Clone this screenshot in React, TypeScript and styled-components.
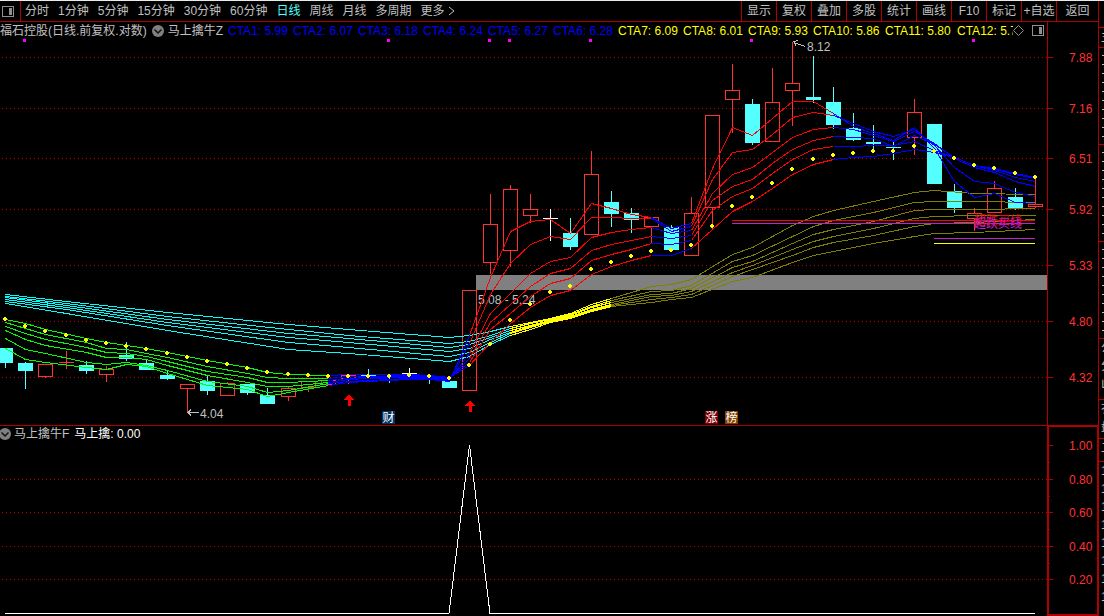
import React, { useEffect, useRef, useState } from "react";
import styled, { createGlobalStyle } from "styled-components";

const RED_LINE = "#b00000";
const UP = "#ff3232";
const DOWN = "#54ffff";
const GREY = "#c0c0c0";
const FONT = `"Liberation Sans", "Noto Sans CJK SC", sans-serif`;

const Global = createGlobalStyle`
  * { box-sizing: border-box; }
  body { margin: 0; background: #000; color: ${GREY}; font: 12px/16px ${FONT}; }
`;

const Page = styled.div`
  display: flex;
  min-height: 100vh;
  border-top: 1px solid #e8ece8;
  background: #000;
`;
const Main = styled.main`
  flex: 1;
  min-width: 0;
  display: flex;
  flex-direction: column;
`;
const Toolbar = styled.header`
  display: flex;
  height: 21px;
  border-bottom: 1px solid ${RED_LINE};
`;
const PlainButton = styled.button`
  padding: 0;
  border: 0;
  background: none;
  color: inherit;
  font: inherit;
  white-space: nowrap;
  cursor: pointer;
`;
const LayoutButton = styled(PlainButton)`
  display: flex;
  align-items: center;
  width: 21px;
  padding-left: 2px;
  border-right: 1px solid ${RED_LINE};
`;
const Periods = styled.nav`
  flex: 1;
  display: flex;
  align-items: center;
  gap: 9px;
  padding-left: 4px;
  overflow: hidden;
`;
const PeriodButton = styled(PlainButton)<{ $active?: boolean }>`
  display: flex;
  align-items: center;
  gap: 3px;
  color: ${(p) => (p.$active ? DOWN : GREY)};
`;
const Tools = styled.div`
  display: flex;
`;
const ToolButton = styled(PlainButton)<{ $wide?: boolean }>`
  width: ${(p) => (p.$wide ? 42 : 35)}px;
  border-left: 1px solid ${RED_LINE};
`;
const Panel = styled.section`
  display: flex;
`;
const Plot = styled.div<{ $divided?: boolean }>`
  flex: 1;
  min-width: 0;
  border-top: ${(p) => (p.$divided ? `1px solid ${RED_LINE}` : "0")};
  & > svg { display: block; width: 100%; }
`;
const Legend = styled.div<{ $height: number }>`
  display: flex;
  align-items: center;
  height: ${(p) => p.$height}px;
  white-space: nowrap;
`;
const ToggleButton = styled(PlainButton)<{ $edge?: boolean }>`
  display: flex;
  margin: ${(p) => (p.$edge ? "0 3px 0 -1px" : "0 4px 0 5px")};
`;
const IndicatorName = styled.span`
  margin-right: 5px;
`;
const Values = styled.div`
  flex: 1;
  min-width: 0;
  display: flex;
  overflow: hidden;
`;
const Value = styled.span<{ $color: string; $wide?: boolean }>`
  flex: none;
  width: ${(p) => (p.$wide ? 72 : 65)}px;
  color: ${(p) => p.$color};
`;
const LegendTools = styled.div`
  display: flex;
  align-items: center;
  gap: 8px;
  padding-right: 3px;
`;
const White = styled.span`
  color: #fff;
`;
const Axis = styled.div<{ $selected?: boolean }>`
  width: 51px;
  border: 0 solid ${RED_LINE};
  border-width: ${(p) => (p.$selected ? "2px 1px 2px 2px" : "0 0 0 1px")};
  & > svg { display: block; width: 100%; }
`;
const Strip = styled.aside`
  width: 6px;
  overflow: hidden;
  border-left: 1px solid ${RED_LINE};
`;
const StripCell = styled.div<{ $height: number; $marks?: boolean; $last?: boolean }>`
  height: ${(p) => p.$height}px;
  padding-left: 2px;
  overflow: hidden;
  line-height: 18px;
  border-bottom: ${(p) => (p.$last ? "0" : `1px solid ${RED_LINE}`)};
  background: ${(p) =>
    p.$marks
      ? `repeating-linear-gradient(transparent 0 7px, ${GREY} 7px 8px, transparent 8px 9px) 3px 0 no-repeat`
      : "none"};
`;
const StripLine = styled.div`
  width: 12px;
`;

/* ---------- data ---------- */

type Candle = [kind: "u" | "d" | "w", high: number, top: number, bottom: number, low: number];

const candles: Candle[] = [
  ["d", 348, 348, 363, 368], ["d", 362, 363, 371, 389], ["u", 364, 364, 377, 378], ["u", 351, 362, 363, 369],
  ["d", 361, 365, 371, 374], ["u", 366, 369, 375, 382], ["d", 342, 355, 359, 361], ["d", 359, 363, 370, 370],
  ["d", 371, 375, 379, 380], ["u", 384, 384, 389, 413], ["d", 375, 381, 391, 395], ["u", 382, 383, 396, 396],
  ["d", 384, 384, 393, 395], ["d", 388, 395, 404, 404], ["u", 387, 388, 397, 401], ["u", 381, 381, 388, 392],
  ["u", 380, 380, 385, 385], ["u", 375, 375, 379, 384], ["d", 369, 374, 378, 378], ["d", 375, 376, 378, 383],
  ["w", 368, 373, 374, 376], ["d", 376, 376, 379, 384], ["d", 379, 381, 388, 388], ["u", 290, 290, 391, 391],
  ["u", 194, 224, 263, 274], ["u", 185, 189, 251, 267], ["u", 194, 209, 216, 223], ["w", 209, 218, 219, 241],
  ["d", 218, 233, 247, 250], ["u", 151, 174, 235, 235], ["d", 191, 202, 214, 227], ["d", 208, 213, 220, 233],
  ["u", 217, 217, 227, 243], ["d", 225, 227, 250, 250], ["u", 197, 213, 256, 256], ["u", 115, 115, 208, 229],
  ["u", 64, 90, 100, 133], ["d", 99, 104, 143, 145], ["u", 68, 102, 142, 142], ["u", 42, 83, 91, 126],
  ["d", 56, 97, 100, 103], ["d", 87, 102, 125, 129], ["d", 113, 128, 140, 141], ["d", 125, 142, 144, 150],
  ["d", 142, 147, 148, 160], ["u", 99, 112, 138, 155], ["d", 124, 124, 184, 184], ["d", 184, 191, 208, 213],
  ["u", 208, 213, 219, 231], ["u", 181, 188, 213, 213], ["d", 188, 197, 208, 210], ["u", 177, 204, 207, 208],
];

const dots = [
  319, 326, 331, 335, 340, 343, 346, 349, 353, 357, 361, 364, 368, 372, 374, 375, 376, 376, 376, 376, 375, 376, 378,
  365, 344, 320, 304, 292, 286, 269, 262, 256, 251, 250, 245, 226, 206, 197, 183, 169, 159, 155, 153, 151, 151, 146,
  151, 158, 165, 168, 173, 177,
];

/* Each row is [bar index, y of the six averages]. */
type Row = [number, number[]];
type Segment = { color: string; from: number; to: number };

const slowRows: Row[] = [
  [0, [294, 296, 297, 299, 301, 303]], [3, [301, 303, 305, 307, 309, 313]], [8, [312, 316, 319, 322, 325, 330]],
  [14, [324, 329, 333, 337, 342, 349]], [17, [329, 335, 338, 342, 347, 353]], [22, [337, 343, 347, 351, 356, 361]],
  [23, [335, 341, 344, 348, 352, 356]], [24, [331, 335, 337, 339, 342, 344]], [25, [326, 328, 330, 332, 333, 335]],
  [26, [322, 323, 325, 326, 327, 329]], [27, [318, 319, 320, 320, 321, 322]], [28, [313, 314, 315, 316, 317, 318]],
  [29, [304, 306, 307, 309, 310, 311]], [30, [298, 300, 302, 304, 305, 306]], [32, [286, 291, 294, 296, 299, 302]],
  [33, [284, 290, 293, 295, 297, 299]], [34, [279, 285, 288, 291, 294, 297]], [36, [254, 261, 267, 272, 276, 281]],
  [37, [247, 255, 261, 265, 269, 277]], [39, [225, 236, 243, 249, 255, 262]], [40, [216, 226, 234, 241, 247, 255]],
  [41, [210, 220, 229, 236, 242, 251]], [43, [201, 212, 221, 228, 235, 243]], [45, [192, 202, 210, 218, 226, 236]],
  [46, [190, 201, 209, 216, 223, 233]], [48, [193, 201, 209, 215, 222, 232]], [51, [194, 202, 208, 215, 219, 229]],
];
const slowSegments: Segment[] = [
  { color: "#00ffff", from: 0, to: 25 },
  { color: "#ffff00", from: 25, to: 30 },
  { color: "#808000", from: 30, to: 51 },
];

const fastRows: Row[] = [
  [0, [348, 338, 330, 326, 322, 319]], [1, [359, 349, 339, 333, 328, 323]], [2, [362, 353, 345, 339, 334, 329]],
  [4, [367, 362, 352, 347, 342, 338]], [5, [369, 364, 357, 352, 348, 342]], [6, [364, 362, 357, 353, 349, 345]],
  [7, [366, 365, 359, 356, 353, 348]], [8, [373, 370, 365, 361, 357, 352]], [10, [385, 381, 375, 371, 366, 360]],
  [12, [389, 386, 382, 377, 373, 367]], [13, [396, 392, 386, 382, 377, 372]], [14, [392, 390, 386, 382, 378, 374]],
  [16, [385, 383, 382, 380, 378, 375]], [17, [382, 381, 379, 378, 376, 374]], [18, [381, 380, 378, 377, 376, 374]],
  [20, [379, 378, 377, 376, 375, 374]], [21, [379, 378, 378, 377, 376, 375]], [22, [381, 380, 379, 378, 377, 377]],
  [23, [335, 343, 353, 358, 362, 365]], [24, [277, 294, 313, 322, 329, 342]], [25, [231, 263, 293, 304, 313, 323]],
  [26, [221, 244, 273, 286, 296, 307]], [27, [219, 236, 261, 273, 283, 295]], [28, [233, 239, 257, 268, 278, 290]],
  [29, [203, 217, 237, 250, 260, 274]], [30, [208, 217, 232, 244, 254, 266]], [31, [214, 218, 229, 240, 249, 260]],
  [32, [217, 218, 227, 236, 243, 255]], [33, [228, 231, 233, 238, 244, 255]], [34, [223, 226, 230, 235, 240, 248]],
  [35, [168, 179, 193, 200, 210, 229]], [36, [127, 152, 174, 186, 196, 211]], [37, [135, 149, 167, 179, 188, 201]],
  [38, [118, 134, 152, 163, 173, 188]], [39, [101, 117, 137, 149, 159, 174]], [40, [101, 112, 129, 140, 149, 164]],
  [41, [113, 115, 127, 136, 146, 159]], [42, [126, 123, 129, 137, 146, 157]], [43, [133, 131, 135, 138, 145, 156]],
  [44, [140, 136, 141, 146, 145, 153]], [45, [127, 129, 131, 135, 141, 149]], [46, [148, 145, 143, 144, 150, 152]],
  [47, [181, 167, 158, 157, 157, 157]], [48, [197, 181, 167, 165, 165, 165]], [49, [193, 183, 172, 170, 169, 168]],
  [50, [202, 192, 181, 177, 174, 173]], [51, [203, 196, 186, 181, 178, 177]],
];
const fastSegments: Segment[] = [
  { color: "#00ff00", from: 0, to: 16 },
  { color: "#0000ff", from: 16, to: 23 },
  { color: "#ff0000", from: 23, to: 32 },
  { color: "#0000ff", from: 32, to: 34 },
  { color: "#ff0000", from: 34, to: 41 },
  { color: "#0000ff", from: 41, to: 51 },
];

const periods = ["分时", "1分钟", "5分钟", "15分钟", "30分钟", "60分钟", "日线", "周线", "月线", "多周期"];
const tools = ["显示", "复权", "叠加", "多股", "统计", "画线", "F10", "标记", "+自选", "返回"];
const ctas = ["5.99", "6.07", "6.18", "6.24", "6.27", "6.28", "6.09", "6.01", "5.93", "5.86", "5.80", "5.74"];
const priceTicks: [string, number][] = [
  ["7.88", 57], ["7.16", 108], ["6.51", 158], ["5.92", 209], ["5.33", 265], ["4.80", 321], ["4.32", 377],
];
const signalTicks: [string, number][] = [
  ["1.00", 445], ["0.80", 479], ["0.60", 512], ["0.40", 546], ["0.20", 579],
];

/* ---------- drawing ---------- */

const BASE = 1047;
const barX = (i: number) => Math.round(5 + 20.19 * i);

function usePlotWidth() {
  const ref = useRef<HTMLDivElement>(null);
  const [width, setWidth] = useState(BASE);
  useEffect(() => {
    if (!ref.current) return;
    const watcher = new ResizeObserver(([entry]) => setWidth(Math.round(entry.contentRect.width)));
    watcher.observe(ref.current);
    return () => watcher.disconnect();
  }, []);
  return { ref, width, sx: (x: number) => Math.round((x * width) / BASE) };
}

type Scale = (x: number) => number;

function Averages({ rows, segments, sx }: { rows: Row[]; segments: Segment[]; sx: Scale }) {
  return (
    <g fill="none">
      {segments.map((s) =>
        rows[0][1].map((_, k) => (
          <polyline
            key={`${s.from}-${k}`}
            stroke={s.color}
            points={rows
              .filter(([i]) => i >= s.from && i <= s.to)
              .map(([i, ys]) => `${sx(barX(i)) + 0.5},${ys[k] + 0.5}`)
              .join(" ")}
          />
        ))
      )}
    </g>
  );
}

function Candles({ sx }: { sx: Scale }) {
  return (
    <g>
      {candles.map(([kind, high, top, bottom, low], i) => {
        const x = sx(barX(i));
        const color = kind === "u" ? UP : kind === "d" ? DOWN : "#fff";
        return (
          <g key={i} fill={color}>
            {high < top && <rect x={x} y={high} width={1} height={top - high} />}
            {low > bottom && <rect x={x} y={bottom} width={1} height={low - bottom} />}
            {kind === "u" && bottom - top > 1 ? (
              <rect x={x - 6.5} y={top + 0.5} width={14} height={bottom - top - 1} fill="none" stroke={UP} />
            ) : (
              <rect x={x - 7} y={top} width={15} height={bottom - top} />
            )}
          </g>
        );
      })}
    </g>
  );
}

function GridLine({ y, width }: { y: number; width: number }) {
  return <path d={`M2 ${y + 0.5}H${width}`} stroke="#c00000" strokeDasharray="1 3" />;
}

function Badge({ x, fill, label }: { x: number; fill: string; label: string }) {
  return (
    <g>
      <rect x={x} y={411} width={13} height={13} fill={fill} />
      <text x={x + 0.5} y={422} fill="#fff">{label}</text>
    </g>
  );
}

function BuyArrow({ x, y }: { x: number; y: number }) {
  return <path d={`M${x} ${y}l5 6h-3v6h-3v-6h-4z`} fill="#ff0000" />;
}

function PriceChart({ width, sx }: { width: number; sx: Scale }) {
  return (
    <svg height={386} viewBox={`0 39 ${width} 386`} fontSize={12} fontFamily={FONT} shapeRendering="crispEdges">
      {priceTicks.map(([label, y]) => <GridLine key={label} y={y} width={width} />)}
      <rect x={sx(476)} y={275} width={width - sx(476)} height={15} fill="#808080" />
      <text x={sx(478)} y={304} fill={GREY}>5.08 - 5.24</text>
      {[24, 388, 489, 509, 590, 751, 973].map((x) => (
        <rect key={x} x={sx(x) - 1} y={39} width={3} height={3} fill="#ff00ff" />
      ))}
      <Candles sx={sx} />
      <Averages rows={slowRows} segments={slowSegments} sx={sx} />
      <Averages rows={fastRows} segments={fastSegments} sx={sx} />
      <path d={`M${sx(732)} 220.5H${sx(1035)}`} stroke="#ff0000" />
      <path d={`M${sx(732)} 223.5H${sx(1035)}`} stroke="#c020d0" />
      <path d={`M${sx(934)} 238.5H${sx(1035)}`} stroke="#c020d0" />
      <path d={`M${sx(934)} 243.5H${sx(1035)}`} stroke="#ffff00" />
      <text x={sx(974)} y={225} fill="#e00000">超跌买线</text>
      <text x={sx(974)} y={228} fill="#c020d0">超跌买线</text>
      <g fill="#ffff00">
        {dots.map((y, i) => {
          const x = sx(barX(i));
          return <path key={i} d={`M${x - 1} ${y - 2}h2v1h1v2h-1v1h-2v-1h-1v-2h1z`} />;
        })}
      </g>
      <BuyArrow x={sx(349)} y={394} />
      <BuyArrow x={sx(470)} y={400} />
      <Badge x={sx(382)} fill="#003366" label="财" />
      <Badge x={sx(705)} fill="#7a0000" label="涨" />
      <Badge x={sx(725)} fill="#804000" label="榜" />
      <g fill="none" stroke={GREY}>
        <path d={`M${sx(187)} 412.5h12M${sx(187) + 4} 409.5l-3 3l3 3`} />
        <path d={`M${sx(794)} 42.5l11 4M${sx(794) + 4} 40.5l-4 1l2 4`} />
      </g>
      <text x={sx(200)} y={418} fill={GREY}>4.04</text>
      <text x={sx(807)} y={51} fill={GREY}>8.12</text>
    </svg>
  );
}

function SignalChart({ width, sx }: { width: number; sx: Scale }) {
  return (
    <svg height={174} viewBox={`0 442 ${width} 174`} shapeRendering="crispEdges">
      {signalTicks.slice(1).map(([label, y]) => <GridLine key={label} y={y} width={width} />)}
      <path
        d={`M${sx(5)} 613.5H${sx(449)}L${sx(469) + 0.5} 445L${sx(490)} 613.5H${sx(1035)}`}
        fill="none"
        stroke="#fff"
      />
    </svg>
  );
}

function AxisScale({ ticks, minor = [], top, height, inset }: {
  ticks: [string, number][]; minor?: number[]; top: number; height: number; inset: number;
}) {
  return (
    <svg height={height} viewBox={`${inset} ${top} ${inset === 1 ? 50 : 48} ${height}`} fontSize={12} fontFamily={FONT}>
      {ticks.map(([label, y]) => (
        <g key={label}>
          <rect x={inset} y={y} width={6 - inset} height={1} fill={RED_LINE} />
          <text x={22} y={y + 5} fill={UP}>{label}</text>
        </g>
      ))}
      {minor.map((y) => <rect key={y} x={inset} y={y} width={1} height={1} fill={RED_LINE} />)}
    </svg>
  );
}

function SplitIcon() {
  return (
    <svg width="12" height="11" viewBox="0 0 12 11" shapeRendering="crispEdges">
      <rect x="0.5" y="0.5" width="11" height="10" rx="1" fill="none" stroke="#909090" />
      <rect x="7" y="2" width="3" height="7" fill="#909090" />
    </svg>
  );
}

function RoundChevron() {
  return (
    <svg width="12" height="12" viewBox="0 0 12 12">
      <circle cx="6" cy="6" r="6" fill="#808080" />
      <path d="M2.5 4.5L6 8L9.5 4.5" fill="none" stroke="#111" strokeWidth="1.5" />
    </svg>
  );
}

function DiamondIcon() {
  return (
    <svg width="11" height="11" viewBox="0 0 11 11">
      <path d="M5.5 0.5L10.5 5.5L5.5 10.5L0.5 5.5Z" fill="none" stroke="#909090" />
    </svg>
  );
}

export default function App() {
  const price = usePlotWidth();
  const signal = usePlotWidth();
  return (
    <>
      <Global />
      <Page>
        <Main>
          <Toolbar>
            <LayoutButton aria-label="布局"><SplitIcon /></LayoutButton>
            <Periods>
              {periods.map((p) => <PeriodButton key={p} $active={p === "日线"}>{p}</PeriodButton>)}
              <PeriodButton>
                更多
                <svg width="7" height="10" viewBox="0 0 7 10">
                  <path d="M1 1L6 5L1 9" fill="none" stroke={GREY} />
                </svg>
              </PeriodButton>
            </Periods>
            <Tools>
              {tools.map((t) => <ToolButton key={t} $wide={t === "返回"}>{t}</ToolButton>)}
            </Tools>
          </Toolbar>

          <Panel>
            <Plot ref={price.ref}>
              <Legend $height={17}>
                <span>福石控股(日线.前复权.对数)</span>
                <ToggleButton aria-label="指标"><RoundChevron /></ToggleButton>
                <IndicatorName>马上擒牛Z</IndicatorName>
                <Values>
                  {ctas.map((v, i) => (
                    <Value key={i} $color={i < 6 ? "#0000ff" : "#ffff00"} $wide={i > 8}>
                      {`CTA${i + 1}: ${v}`}
                    </Value>
                  ))}
                </Values>
                <LegendTools><DiamondIcon /><SplitIcon /></LegendTools>
              </Legend>
              <PriceChart width={price.width} sx={price.sx} />
            </Plot>
            <Axis>
              <AxisScale ticks={priceTicks} top={22} height={403} inset={1} />
            </Axis>
          </Panel>

          <Panel>
            <Plot $divided ref={signal.ref}>
              <Legend $height={16}>
                <ToggleButton $edge aria-label="指标"><RoundChevron /></ToggleButton>
                <IndicatorName>马上擒牛F</IndicatorName>
                <White>马上擒: 0.00</White>
              </Legend>
              <SignalChart width={signal.width} sx={signal.sx} />
            </Plot>
            <Axis $selected>
              <AxisScale ticks={signalTicks} minor={[462, 496, 529, 563]} top={427} height={187} inset={2} />
            </Axis>
          </Panel>
        </Main>

        <Strip>
          <StripCell $height={27} />
          <StripCell $height={20}><StripLine>主</StripLine></StripCell>
          <StripCell $height={97} $marks />
          <StripCell $height={97} $marks />
          <StripCell $height={97} $marks />
          <StripCell $height={61}>
            <StripLine>公</StripLine>
            <StripLine>分</StripLine>
            <StripLine>山</StripLine>
          </StripCell>
          <StripCell $height={39}>
            <StripLine>衣</StripLine>
            <StripLine>盘</StripLine>
          </StripCell>
          <StripCell $height={23}><StripLine>二</StripLine></StripCell>
          <StripCell $height={154} $last>
            {Array.from({ length: 8 }, (_, i) => <StripLine key={i}>1</StripLine>)}
          </StripCell>
        </Strip>
      </Page>
    </>
  );
}
